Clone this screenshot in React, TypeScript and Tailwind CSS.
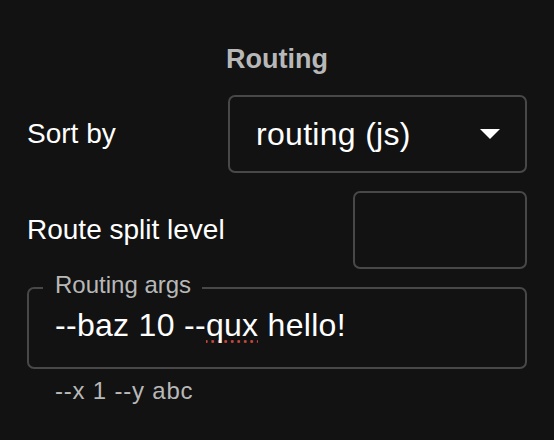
function DropArrow() {
  return (
    <svg width="20" height="10" viewBox="0 0 20 10" className="shrink-0">
      <path d="M0 0 L20 0 L10 10 Z" fill="#ffffff" />
    </svg>
  );
}

function App() {
  return (
    <div className="w-[554px] h-[440px] bg-[#121212] text-white font-['Liberation_Sans',Arial,sans-serif] px-[27px] pt-[43px] overflow-hidden">
      <div className="text-center font-bold text-[27px] leading-[32px] text-[#b8b8b8]">Routing</div>

      <div className="mt-[20px] flex items-center justify-between">
        <span className="text-[28px] leading-[32px]">Sort by</span>
        <div className="w-[299px] h-[78px] border-2 border-[#484848] rounded-[7px] flex items-center justify-between pl-[26px] pr-[25px]">
          <span className="text-[32px] leading-[40px] tracking-[0.3px]">routing (js)</span>
          <DropArrow />
        </div>
      </div>

      <div className="mt-[18px] flex items-center justify-between">
        <span className="text-[28px] leading-[32px]">Route split level</span>
        <div className="w-[174px] h-[78px] border-2 border-[#484848] rounded-[7px]" />
      </div>

      <fieldset className="mt-[4px] m-0 p-0 border-2 border-[#484848] rounded-[7px] min-w-0">
        <legend className="ml-[14px] pl-[12px] pr-[11px] pb-[6px] text-[24px] leading-[24px] text-[#b8b8b8]">
          Routing args
        </legend>
        <div className="pl-[26px] pt-[2px] pb-[22px] text-[32px] leading-[40px] tracking-[0.3px] whitespace-nowrap">
          --baz 10 --
          <span className="bg-[radial-gradient(circle,#c8463a_1.2px,transparent_1.7px)] bg-[length:6.5px_3px] bg-repeat-x bg-bottom">qux</span>
          {" "}hello!
        </div>
      </fieldset>

      <div className="mt-[6px] pl-[28px] text-[24px] leading-[32px] tracking-[0.8px] text-[#b8b8b8]">--x 1 --y abc</div>
    </div>
  );
}

export default App;
